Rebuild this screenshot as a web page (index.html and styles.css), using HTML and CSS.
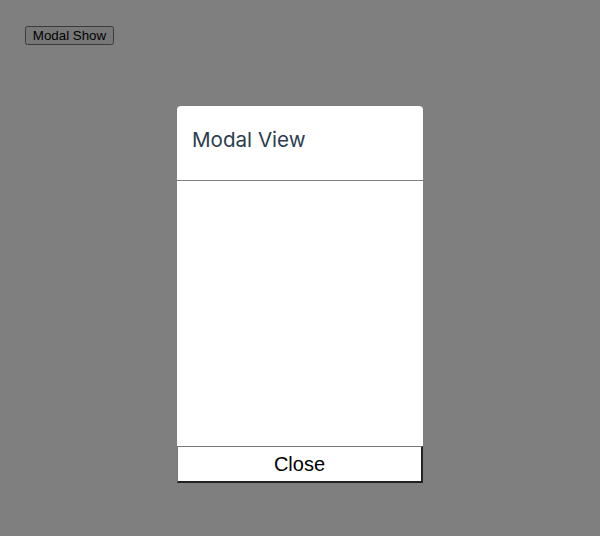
FILE: index.html
```html
<!DOCTYPE html>
<html>
<head>
    <title>Modal</title>
    <link rel="stylesheet" href="styles.css">
</head>
<body>
    <div class="app">
        <button class="show-button">Modal Show</button>
    </div>

    <div class="modal-overlay">
        <div class="modal">
            <div class="modal-header">
                <h3>Modal View</h3>
            </div>
            <div class="modal-body"></div>
            <button class="close-button">Close</button>
        </div>
    </div>
</body>
</html>
```

FILE: styles.css
```css
body {
    margin: 0;
    padding: 0;
    background: #fff;
    font-family: "Liberation Sans", Arial, sans-serif;
}

.app {
    padding: 26px 25px;
}

.show-button {
    font-family: "Liberation Sans", Arial, sans-serif;
    font-size: 13.33px;
    height: 19px;
    width: 89px;
    padding: 0;
}

.modal-overlay {
    position: fixed;
    top: 0;
    left: 0;
    right: 0;
    bottom: 0;
    background: rgba(0, 0, 0, 0.5);
    display: flex;
    justify-content: center;
    align-items: flex-start;
    padding-top: 106px;
}

.modal {
    width: 246px;
    background: #fff;
    border-radius: 4px;
    display: flex;
    flex-direction: column;
}

.modal-header {
    height: 74px;
    border-bottom: 1px solid #808080;
    padding: 0 15px;
}

.modal-header h3 {
    margin: 0;
    padding-top: 21px;
    font-family: Inter, "Liberation Sans", sans-serif;
    font-size: 20.6px;
    font-weight: normal;
    color: #2c3e50;
}

.modal-body {
    height: 265px;
}

.close-button {
    width: 100%;
    height: 37px;
    margin: 0;
    padding: 1px 0 0;
    background: #fff;
    border: 2px outset #767676;
    border-top-width: 1px;
    border-left-width: 1px;
    font-family: "Liberation Sans", Arial, sans-serif;
    font-size: 20px;
    color: #000;
}
```
